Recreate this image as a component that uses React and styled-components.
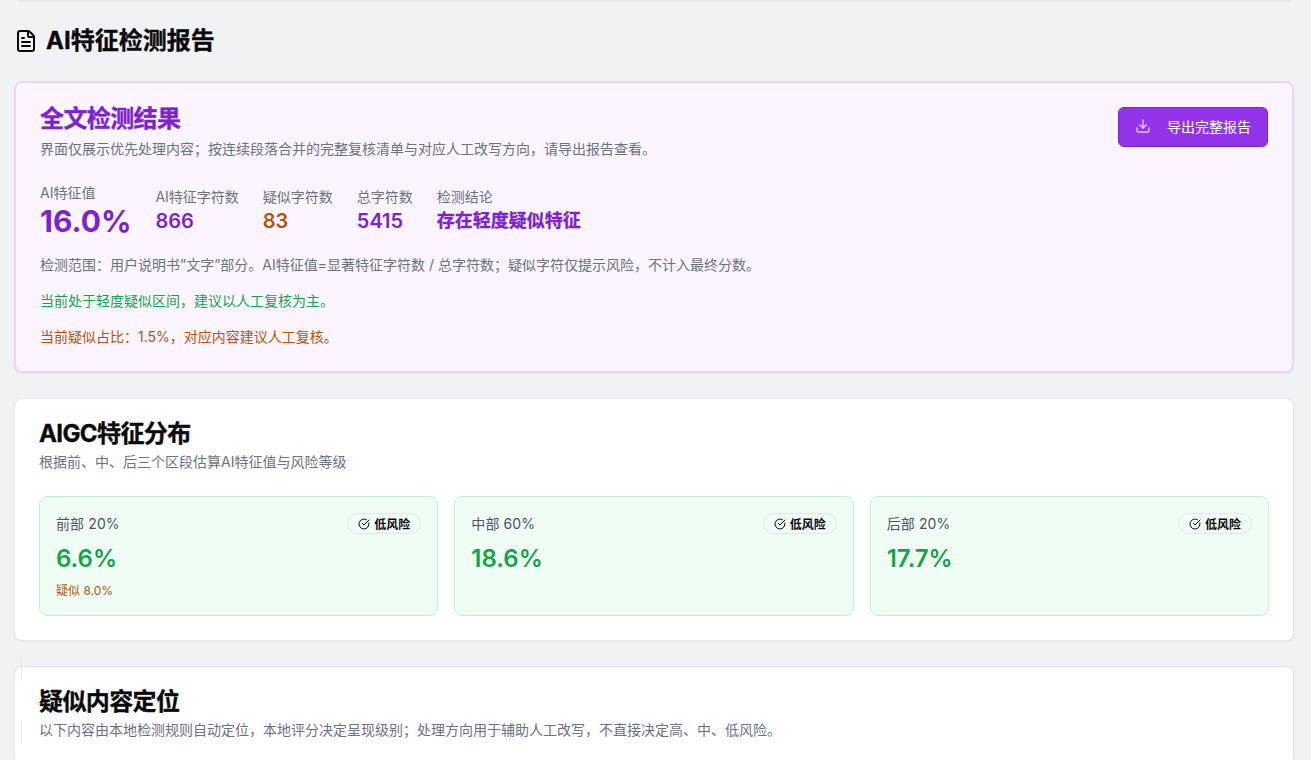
import React from 'react'
import styled, { createGlobalStyle } from 'styled-components'
import { FileText, Download, CircleCheckBig } from 'lucide-react'

const GlobalStyle = createGlobalStyle`
  html, body {
    margin: 0;
    padding: 0;
    height: 760px;
    overflow: hidden;
    background: #f1f2f4;
    font-family: Inter, "Noto Sans CJK SC", "Liberation Sans", sans-serif;
    color: #0a0a0a;
  }
  * { box-sizing: border-box; }
`

const Page = styled.div`
  position: relative;
  height: 760px;
  overflow: hidden;
  padding: 0 17px 0 14px;
`

const TopShadow = styled.div`
  height: 1px;
  margin: 0 3px;
  background: #e7e8ea;
  box-shadow: 0 1px 2px rgba(0, 0, 0, 0.07);
`

const PageTitle = styled.h1`
  display: flex;
  align-items: center;
  gap: 8px;
  margin: 24px 0;
  height: 32px;
  font-size: 24px;
  line-height: 32px;
  font-weight: 700;
  -webkit-text-stroke: 0.35px currentColor;

  svg { -webkit-text-stroke: 0; }
`

const Card = styled.section`
  background: #fff;
  border: 1px solid #e5e7eb;
  border-radius: 8px;
  padding: 24px;
  margin-bottom: 25px;
  box-shadow: 0 1px 2px rgba(0, 0, 0, 0.05);
`

const SummaryCard = styled(Card)`
  background: #faf5ff;
  border: 2px solid #e9d5ff;
`

const SummaryHead = styled.div`
  display: flex;
  justify-content: space-between;
  align-items: flex-start;
`

const SummaryTitle = styled.h2`
  margin: 0 0 8px;
  font-size: 24px;
  line-height: 24px;
  font-weight: 700;
  letter-spacing: -0.6px;
  color: #7e22ce;
  -webkit-text-stroke: 0.35px currentColor;
`

const Muted = styled.p`
  margin: 0;
  font-size: 14px;
  line-height: 20px;
  color: #6b7280;
`

const ExportButton = styled.button`
  display: flex;
  align-items: center;
  gap: 16px;
  height: 40px;
  padding: 0 16px 2px;
  border: 1px solid #7e22ce;
  border-radius: 6px;
  background: #9333ea;
  color: #fff;
  font-family: inherit;
  font-size: 14px;
  font-weight: 400;

  svg { opacity: 0.75; }
`

const Stats = styled.div`
  display: flex;
  align-items: center;
  gap: 24px;
  margin-top: 24px;
`

const Stat = styled.div`
  display: flex;
  flex-direction: column;
`

const StatLabel = styled.span`
  font-size: 14px;
  line-height: 20px;
  color: #6b7280;
`

const StatValue = styled.span`
  font-size: ${(p) => (p.$big ? '30px' : p.$text ? '18px' : '20px')};
  line-height: ${(p) => (p.$big ? '36px' : '28px')};
  font-weight: ${(p) => (p.$big || p.$text ? 700 : 600)};
  color: ${(p) => p.$color || '#7e22ce'};
  -webkit-text-stroke: ${(p) => (p.$text ? '0.3px currentColor' : '0')};
`

const Notes = styled.div`
  display: flex;
  flex-direction: column;
  gap: 16px;
  margin-top: 16px;
`

const Note = styled.p`
  margin: 0;
  font-size: 14px;
  line-height: 20px;
  color: ${(p) => p.$color || '#6b7280'};
`

const SectionTitle = styled.h2`
  margin: 0 0 8px;
  font-size: 24px;
  line-height: 21px;
  font-weight: 700;
  letter-spacing: -0.6px;
  -webkit-text-stroke: 0.35px currentColor;
`

const Zones = styled.div`
  display: grid;
  grid-template-columns: repeat(3, 1fr);
  gap: 16px;
  margin-top: 24px;
`

const Zone = styled.div`
  height: 120px;
  padding: 16px;
  background: #f0fdf4;
  border: 1px solid #bbf7d0;
  border-radius: 8px;
`

const ZoneHead = styled.div`
  display: flex;
  justify-content: space-between;
  align-items: center;
  height: 21px;
`

const ZoneLabel = styled.span`
  padding-bottom: 2px;
  font-size: 14px;
  letter-spacing: 0.1px;
  color: #4b5563;
`

const Badge = styled.span`
  display: inline-flex;
  align-items: center;
  gap: 4px;
  height: 21px;
  padding: 0 10px;
  border: 1px solid #e5e7eb;
  border-radius: 999px;
  font-size: 12px;
  font-weight: 600;
`

const ZoneValue = styled.div`
  margin-top: 9px;
  font-size: 24px;
  line-height: 32px;
  font-weight: 600;
  color: #16a34a;
`

const ZoneNote = styled.div`
  margin-top: 8px;
  font-size: 12px;
  line-height: 16px;
  color: #b45309;
`

const GuideLine = styled.span`
  position: absolute;
  left: 21px;
  top: ${(p) => p.$top}px;
  width: 1px;
  height: 24px;
  background: #e5e7eb;
`

const zones = [
  { label: '前部 20%', value: '6.6%', note: '疑似 8.0%' },
  { label: '中部 60%', value: '18.6%' },
  { label: '后部 20%', value: '17.7%' },
]

export default function App() {
  return (
    <Page>
      <GlobalStyle />
      <TopShadow />
      <PageTitle>
        <FileText size={24} strokeWidth={2} />
        AI特征检测报告
      </PageTitle>

      <SummaryCard>
        <SummaryHead>
          <div>
            <SummaryTitle>全文检测结果</SummaryTitle>
            <Muted>界面仅展示优先处理内容；按连续段落合并的完整复核清单与对应人工改写方向，请导出报告查看。</Muted>
          </div>
          <ExportButton>
            <Download size={16} />
            导出完整报告
          </ExportButton>
        </SummaryHead>
        <Stats>
          <Stat>
            <StatLabel>AI特征值</StatLabel>
            <StatValue $big>16.0%</StatValue>
          </Stat>
          <Stat>
            <StatLabel>AI特征字符数</StatLabel>
            <StatValue>866</StatValue>
          </Stat>
          <Stat>
            <StatLabel>疑似字符数</StatLabel>
            <StatValue $color="#b45309">83</StatValue>
          </Stat>
          <Stat>
            <StatLabel>总字符数</StatLabel>
            <StatValue>5415</StatValue>
          </Stat>
          <Stat>
            <StatLabel>检测结论</StatLabel>
            <StatValue $text>存在轻度疑似特征</StatValue>
          </Stat>
        </Stats>
        <Notes>
          <Note>检测范围：用户说明书”文字”部分。AI特征值=显著特征字符数 / 总字符数；疑似字符仅提示风险，不计入最终分数。</Note>
          <Note $color="#16a34a">当前处于轻度疑似区间，建议以人工复核为主。</Note>
          <Note $color="#b45309">当前疑似占比：1.5%，对应内容建议人工复核。</Note>
        </Notes>
      </SummaryCard>

      <Card>
        <SectionTitle>AIGC特征分布</SectionTitle>
        <Muted>根据前、中、后三个区段估算AI特征值与风险等级</Muted>
        <Zones>
          {zones.map((zone) => (
            <Zone key={zone.label}>
              <ZoneHead>
                <ZoneLabel>{zone.label}</ZoneLabel>
                <Badge>
                  <CircleCheckBig size={12} />
                  低风险
                </Badge>
              </ZoneHead>
              <ZoneValue>{zone.value}</ZoneValue>
              {zone.note && <ZoneNote>{zone.note}</ZoneNote>}
            </Zone>
          ))}
        </Zones>
      </Card>

      <Card>
        <SectionTitle>疑似内容定位</SectionTitle>
        <Muted>以下内容由本地检测规则自动定位，本地评分决定呈现级别；处理方向用于辅助人工改写，不直接决定高、中、低风险。</Muted>
      </Card>

      <GuideLine $top={657} />
      <GuideLine $top={720} />
    </Page>
  )
}
